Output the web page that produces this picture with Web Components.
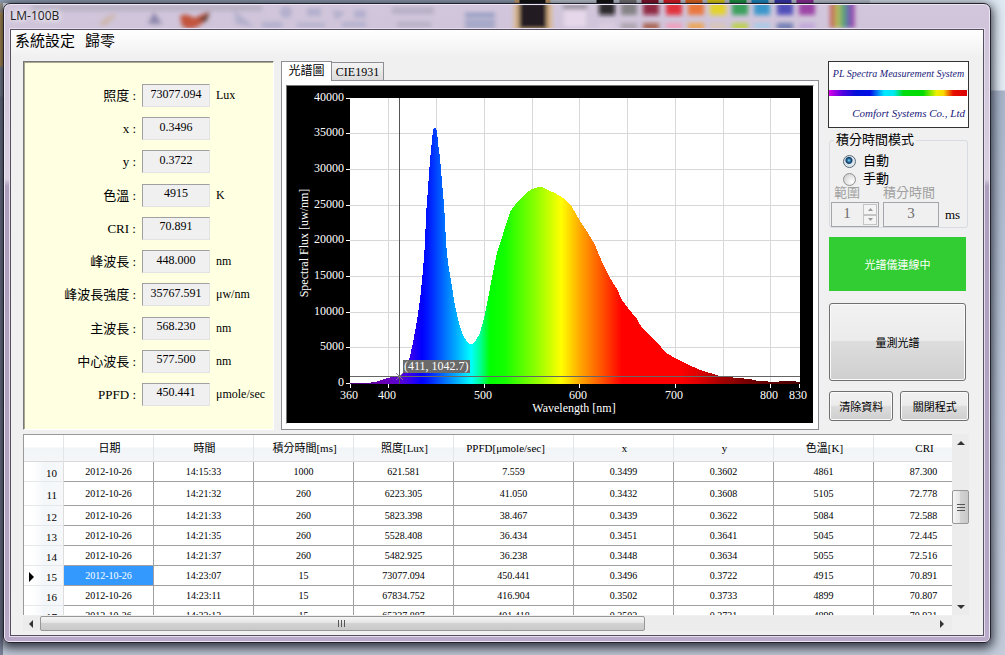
<!DOCTYPE html>
<html lang="zh-Hant">
<head>
<meta charset="utf-8">
<title>LM-100B</title>
<style>
html,body{margin:0;height:100%}
body{box-sizing:border-box;height:100vh;padding:3px 14px 12px 3px;overflow:hidden;display:flex;
 font-family:"Liberation Serif","Noto Sans CJK TC",serif;font-size:13px;color:#000;
 background:
 linear-gradient(90deg,#8f9db0 0 514px,#c9a06a 515px 519px,#111 520px 545px,#c9a06a 546px 550px,#c4ccd6 551px 596px,#111 597px 613px,#c4ccd6 614px 619px,#777 620px 636px,#c4ccd6 637px 641px,#85122b 642px 658px,#c4ccd6 659px 663px,#e51a22 664px 680px,#c4ccd6 681px 685px,#ee6a1e 686px 702px,#c4ccd6 703px 707px,#e8d50e 708px 724px,#c4ccd6 725px 729px,#1f9a44 730px 746px,#c4ccd6 747px 751px,#1c8fc8 752px 768px,#c4ccd6 769px 774px,#3b38b5 775px 791px,#c4ccd6 792px 796px,#93309c 797px 813px,#c4ccd6 814px) 0 0/870px 3px no-repeat,
 linear-gradient(180deg,#a09a90 0 12px,#c9a25c 13px 66px,#8d93a4 67px 96px,#7c8298 97px) 0 0/3px 100% no-repeat,
 linear-gradient(180deg,#dfe9f3 0,#e4edf6 90px,#a9b6cb 91px,#bcc8da 400px,#c3cbda 100%)}
app-window{flex:1}
.top{display:flex;height:369px;flex:none}
reading-panel{width:251px;margin-right:7px}
tab-view{flex:1;min-width:0;margin-right:9px}
.side{width:141px;display:flex;flex-direction:column}
.pair{display:grid;grid-template:30px / 64fr 68fr;gap:7px;margin:10px 0 0 1px}
status-tile{margin:9px 3px 0 1px;height:54px}
.measure{margin:12px 3px 0 1px;height:78px}
data-grid{flex:1;min-height:0;margin-top:4px}
</style>
</head>
<body>
<app-window caption="LM-100B">
  <menu-bar slot="menu"></menu-bar>
  <div class="top">
    <reading-panel>
      <reading-row label="照度" value="73077.094" unit="Lux"></reading-row>
      <reading-row label="x" value="0.3496"></reading-row>
      <reading-row label="y" value="0.3722"></reading-row>
      <reading-row label="色溫" value="4915" unit="K"></reading-row>
      <reading-row label="CRI" value="70.891"></reading-row>
      <reading-row label="峰波長" value="448.000" unit="nm"></reading-row>
      <reading-row label="峰波長強度" value="35767.591" unit="μw/nm"></reading-row>
      <reading-row label="主波長" value="568.230" unit="nm"></reading-row>
      <reading-row label="中心波長" value="577.500" unit="nm"></reading-row>
      <reading-row label="PPFD" value="450.441" unit="μmole/sec"></reading-row>
    </reading-panel>
    <tab-view><spectrum-chart></spectrum-chart></tab-view>
    <div class="side">
      <brand-logo></brand-logo>
      <mode-group></mode-group>
      <status-tile>光譜儀連線中</status-tile>
      <push-button class="measure">量測光譜</push-button>
      <div class="pair"><push-button>清除資料</push-button><push-button>關閉程式</push-button></div>
    </div>
  </div>
  <data-grid></data-grid>
</app-window>

<script>
function define(name, render) {
  customElements.define(name, class extends HTMLElement {
    connectedCallback() {
      if (this.shadowRoot) return;
      const root = this.attachShadow({ mode: 'open' });
      root.innerHTML = '<style>:host,*{box-sizing:border-box}</style>' + render(this);
    }
  });
}

/* Window frame with the toolbar of another program showing through the glass caption */
const swatches = [['#111','#dccfe0'],['#777','#a79fa8'],['#85122b','#a2553c'],['#e51a22','#f59ab8'],['#ee6a1e','#f2a13c'],
  ['#e8d50e','#d9c5b2'],['#1f9a44','#b9d436'],['#1c8fc8','#a4cbe8'],['#3b38b5','#5f71ad'],['#93309c','#bfa5da']];
const glass = `<svg width="988" height="28" viewBox="3 3 988 28" aria-hidden="true">
  <g filter="url(#soft)">
   <path d="M30 3h230v6H30z" fill="#8a8b96" opacity=".35"/>
   <path d="M97 22q10-12 18-9l-12 11z" fill="#c9a06a" opacity=".4"/>
   <path d="M146 22l6-12 8 12z" fill="#4a4a80" opacity=".5"/>
   <path d="M178 14q6-4 14 2l14-6q2 6-8 13t-18 1z" fill="#c2543c"/>
   <path d="M196 18l12-8-4 10z" fill="#5e4036"/>
   <g fill="#8490b8" opacity=".4"><path d="M232 8l20 17-18-3z"/><circle cx="284" cy="10" r="6"/><path d="M305 6h14v8h-14zM330 8l14 2-10 8zM352 8h12v8h-12zM260 20h20v6h-20zM295 21h28v4h-28zM340 20h24v5h-24z"/></g>
   <path d="M390 5h42v7h-42zM395 20h34v5h-34z" fill="#8a8aa0" opacity=".35"/>
   <path d="M463 11h30v4h-30zM463 18h30v3h-30zM463 23h30v3h-30z" fill="#7c8cb8" opacity=".8"/>
   <rect x="512" y="0" width="38" height="30" fill="#d9b68c"/><rect x="517" y="0" width="28" height="27" fill="#211d22"/>
   <rect x="562" y="8" width="22" height="17" fill="#e6d8ea"/><rect x="561" y="3" width="24" height="4" fill="#8a8690"/>
   ${swatches.map((s,i)=>{const x=597+Math.round(i*22.2);return `<rect x="${x}" y="0" width="16" height="13" fill="${s[0]}" opacity=".85"/><rect x="${x}" y="21" width="16" height="7" fill="${s[1]}" opacity=".85"/>`}).join('')}
   <rect x="828" y="0" width="25" height="26" fill="url(#rb)" opacity=".9"/>
  </g>
  <defs><filter id="soft" x="-5%" y="-50%" width="110%" height="200%"><feGaussianBlur stdDeviation="2"/></filter>
  <linearGradient id="rb"><stop stop-color="#c33b4b"/><stop offset=".3" stop-color="#b8c04c"/><stop offset=".55" stop-color="#46a070"/><stop offset=".8" stop-color="#6a48b8"/><stop offset="1" stop-color="#b24aa0"/></linearGradient></defs>
 </svg>`;
define('app-window', el => `<style>
:host{display:flex;flex-direction:column;min-width:0;border:1px solid #22222c;border-radius:7px 7px 6px 6px;padding:0 6px 6px;position:relative;
 background:linear-gradient(180deg,#d2c6dc 0,#cfc4d9 26px,#d9d0e0 175px,#ad9fbd 182px,#b5a6c4 600px,#bbabca 100%);
 box-shadow:inset 0 0 0 1px #eee6f4,0 3px 11px 2px rgba(10,12,22,.8)}
.glass{position:absolute;inset:1px 1px auto;height:25px;overflow:hidden;border-radius:6px 6px 0 0}
.glass svg{display:block}
h1{position:relative;margin:0;height:25px;flex:none;font:12px/24px "Open Sans","Noto Sans",sans-serif;color:#222;text-shadow:0 0 6px #fff,0 0 6px #fff}
main{position:relative;flex:1;min-height:0;display:flex;flex-direction:column;border:1px solid #55505f;background:#f0f0f0;
 padding-bottom:4px;box-shadow:0 0 0 1px #e6dcee}
.body{flex:1;min-height:0;display:flex;flex-direction:column;padding:0 14px 0 12px}
</style><div class="glass">${glass}</div><h1>${el.getAttribute('caption')}</h1><main><slot name="menu"></slot><div class="body"><slot></slot></div></main>`);

define('menu-bar', () => `<style>
:host{display:block;height:31px;flex:none;background:linear-gradient(#fff,#f0f0f0 28px)}
nav{display:flex;gap:10px;padding:0 4px}
button{all:unset;font-size:15px;line-height:22px}
</style><nav><button>系統設定</button><button>歸零</button></nav>`);

define('reading-panel', () => `<style>
:host{display:flex;flex-direction:column;justify-content:space-between;background:#ffffe1;padding:22px 0 23px;
 border:1px solid;border-color:#777 #fff #fff #777;box-shadow:inset 1px 1px #a8a890}
</style><slot></slot>`);

define('reading-row', el => `<style>
:host{display:grid;grid-template-columns:112px 68px 1fr;column-gap:6px;align-items:center;height:23px}
label{text-align:right;line-height:23px;white-space:nowrap}
input{width:68px;height:23px;margin:0;padding:0 0 3px;border:1px solid;border-color:#a0a0a0 #e3e3e3 #e3e3e3 #a0a0a0;background:#f0f0f0;
 font:12px "Liberation Serif",serif;text-align:center;color:#000;outline:none}
span{line-height:23px;font-size:12px}
</style><label for="v">${el.getAttribute('label')} :</label><input id="v" readonly value="${el.getAttribute('value')}"><span>${el.getAttribute('unit')||''}</span>`);

define('tab-view', () => `<style>
:host{display:flex;flex-direction:column}
.tabs{display:flex;align-items:flex-end;height:19px;flex:none}
button{margin:0;font:12px/16px "Liberation Serif","Noto Sans CJK TC",serif;color:#000;border:1px solid #8c8e94;border-bottom:0;padding:0;text-align:center}
.on{width:51px;background:#fff;position:relative;z-index:1;padding-bottom:2px;margin-bottom:-1px;height:20px}
.off{width:52px;height:18px;border-left:0;background:linear-gradient(#f4f4f4,#dcdcdc)}
.page{flex:1;min-height:0;border:1px solid #8c8e94;background:#fff;padding:4px 4px 5px;display:flex}
::slotted(*){flex:1;min-width:0}
</style><div class="tabs" role="tablist"><button class="on" role="tab" aria-selected="true">光譜圖</button><button class="off" role="tab">CIE1931</button></div><div class="page" role="tabpanel"><slot></slot></div>`);

/* Chart: 360–830 nm across 350..800, 0–40000 over 383..98 */
const curve = '350,383 366,383 375,382 381,380 387,378 392,377 399,376 404,372 409,360 413,343 417,320 420,300 423,270 425,243 426,215 428,188 430,160 432,140 433,131 434,128 436,128 437,131 438,143 440,158 442,182 444,205 445,220 446,243 448,263 452,287 455,306 459,323 463,335 467,342 470,344 472,344 475,342 480,333 484,318 487,304 490,288 493,273 497,253 503,234 510,212 517,202 525,194 532,189 538,187 542,187 548,190 555,193 565,199 572,207 580,221 588,233 595,245 602,262 610,278 617,289 622,300 628,308 637,319 642,328 650,336 658,343 665,352 675,358 687,364 700,370 720,376 737,378 750,379 758,381 777,382 780,381 791,381 800,382 800,384 350,384';
const yt = [0,1,2,3,4,5,6,7,8].map(i => [i*5000, Math.round(383 - i*35.65)]);
const xt = [[360,350],[400,388],[500,484],[600,579],[700,675],[800,770],[830,799]];
define('spectrum-chart', () => `<style>
:host{display:flex;background:#000;border:1px solid;border-color:#777 #fff #fff #777}
svg{display:block;width:100%;height:100%}
text{font:12px "Liberation Serif",serif;fill:#fff}
</style><svg viewBox="287 86 526 337" role="img" aria-label="Spectral Flux">
<defs><linearGradient id="sp" gradientUnits="userSpaceOnUse" x1="350" y1="0" x2="800" y2="0">
${[[350,'#4a0070'],[385,'#6a00b8'],[400,'#5800d4'],[412,'#3000f0'],[422,'#0000ff'],[428,'#0018ff'],[446,'#0078ff'],[460,'#00c0ff'],[471,'#00ffff'],[480,'#00ff98'],[490,'#00ff00'],[505,'#14ff00'],[538,'#96ff00'],[561,'#ffff00'],[566,'#ffea00'],[580,'#ffa800'],[600,'#ff5a00'],[622,'#ff0000'],[680,'#ff0000'],[700,'#dc0000'],[720,'#a80000'],[750,'#700000'],[800,'#480000']].map(([x,c])=>`<stop offset="${(x-350)/450}" stop-color="${c}"/>`).join('')}
</linearGradient></defs>
<g shape-rendering="crispEdges">
<rect x="350" y="98" width="450" height="286" fill="#fff"/>
${yt.slice(1,8).map(([,y])=>`<rect x="350" y="${y}" width="450" height="1" fill="#d8d8d8"/>`).join('')}
${[388,436,484,532,579,627,675,723,770].map(x=>`<rect x="${x}" y="98" width="1" height="286" fill="#d8d8d8"/>`).join('')}
<polygon points="${curve}" fill="url(#sp)"/>
${yt.map(([,y])=>`<rect x="346" y="${y}" width="4" height="1" fill="#fff"/>`).join('')}
${xt.map(([,x])=>`<rect x="${x}" y="384" width="1" height="4" fill="#fff"/>`).join('')}
<rect x="399" y="98" width="1" height="286" fill="#555"/><rect x="350" y="376" width="450" height="1" fill="#666"/>
<path d="M396 373l7 7M403 373l-7 7" stroke="#8c7aa0" fill="none"/>
<rect x="403" y="360" width="67" height="13" fill="#6a6a6a"/>
</g>
${yt.map(([v,y])=>`<text x="344" y="${y+3}" text-anchor="end">${v}</text>`).join('')}
${xt.map(([v,x])=>`<text x="${x-1}" y="399" text-anchor="middle">${v}</text>`).join('')}
<text x="404" y="370">(411, 1042.7)</text>
<text x="574" y="412" text-anchor="middle">Wavelength [nm]</text>
<text transform="translate(308 243) rotate(-90)" text-anchor="middle">Spectral Flux [uw/nm]</text>
</svg>`);

define('brand-logo', () => `<style>
:host{display:flex;flex-direction:column;height:67px;border:1px solid #333;background:#fff;flex:none;font-style:italic;font-size:10px;color:#20207a;white-space:nowrap}
p{margin:0;height:28px;line-height:24px;text-align:center}
i{display:block;height:6px;margin-right:1px;background:linear-gradient(90deg,#d800e8 0,#5000e0 10%,#0010d8 20%,#0010e8 30%,#00e8ff 40%,#00e8f0 47%,#00dc10 54%,#00dc00 68%,#f0f000 78%,#f8d800 83%,#e81000 90%,#d80000)}
p+i+p{text-align:right;line-height:34px;padding-right:3px;font-size:11px}
</style><p>PL Spectra Measurement System</p><i></i><p>Comfort Systems Co., Ltd</p>`);

define('mode-group', () => `<style>
:host{display:block;margin:4px 1px 0;height:96px;flex:none}
fieldset{margin:0;height:96px;padding:4px 0 0;border:1px solid #d8dce0;border-radius:3px;min-width:0}
legend{margin-left:4px;padding:0 2px;line-height:16px;font-size:13px}
.r{display:flex;align-items:center;height:18px;margin-left:13px;gap:7px}
.r label{line-height:18px}
input[type=radio]{appearance:none;width:13px;height:13px;margin:0;border:1px solid #8e8f8f;border-radius:50%;background:radial-gradient(circle at 70% 70%,#fff,#c8c8c8)}
input[type=radio]:checked{border-color:#5a6a78;background:radial-gradient(circle at 45% 40%,#7fd8f8 0,#1d5f90 2px,#123a60 3px,#d8e2ea 4px,#eef2f5)}
.g{display:grid;grid-template-columns:48px 56px auto;column-gap:4px;margin:0 0 0 1px;align-items:center}
.g label{color:#a0a0a0;font-size:13px;line-height:10px;height:14px;white-space:nowrap;padding-left:3px}
.g label+label{padding:0}
.g input{width:100%;height:25px;margin:0;border:1px solid #a4a6ac;background:#f0f0f0;color:#6d6d6d;font:15px "Liberation Serif",serif;text-align:center;padding:0 0 2px;outline:none}
.spin{display:flex;border:1px solid #a4a6ac;height:25px}
.g .spin input{border:0;height:23px;min-width:0}
.spin div{display:flex;flex-direction:column;flex:none;width:16px;padding:1px}
.spin button{flex:1;border:1px solid #c4c4c4;background:#f4f4f4;padding:0;font-size:0;display:flex;align-items:center;justify-content:center}
.ms{font-size:13px;padding-left:2px}
</style><fieldset><legend>積分時間模式</legend>
<div class="r"><input type="radio" name="m" id="a" checked><label for="a">自動</label></div>
<div class="r"><input type="radio" name="m" id="b"><label for="b">手動</label></div>
<div class="g"><label for="c">範圍</label><label for="d">積分時間</label><span></span>
<div class="spin"><input id="c" value="1" disabled><div><button disabled aria-label="up"><svg width="5" height="3"><path d="M0 3l2.500-3L5 3z" fill="#999"/></svg></button><button disabled aria-label="down"><svg width="5" height="3"><path d="M0 0l2.500 3L5 0z" fill="#999"/></svg></button></div></div>
<input id="d" value="3" disabled><span class="ms">ms</span></div></fieldset>`);

define('status-tile', () => `<style>
:host{display:flex;align-items:center;justify-content:center;flex:none;background:#32cd32;color:#fff;font-size:11px}
</style><span role="status"><slot></slot></span>`);

define('push-button', () => `<style>
:host{display:flex;flex:none}
button{flex:1;margin:0;padding:0;border:1px solid #707070;border-radius:3px;color:#000;font:11px "Liberation Serif","Noto Sans CJK TC",serif;
 background:linear-gradient(#f2f2f2,#ebebeb 48%,#dddddd 49%,#cfcfcf);box-shadow:inset 0 0 0 1px #fafafa}
</style><button><slot></slot></button>`);

define('scroll-bar', el => {
  const v = el.hasAttribute('vertical');
  const [a, b, c] = el.getAttribute('parts').split(' ');
  const up = v ? 'M0 4l4-4 4 4z' : 'M5 0v8L1 4z', dn = v ? 'M0 0l4 4 4-4z' : 'M0 0v8l4-4z';
  const grip = v ? '<path d="M1 1.500h8M1 4.500h8M1 7.500h8" stroke="#555"/>' : '<path d="M1.500 1v7M4.500 1v7M7.500 1v7" stroke="#555"/>';
  return `<style>
:host{display:flex;flex-direction:${v?'column':'row'};background:#ececec}
button{border:0;background:none;padding:0;flex:0 0 17px;display:flex;align-items:center;justify-content:center}
.a{flex:${a}}.c{flex:${c}}
.t{flex:${b};border:1px solid #979797;border-radius:2px;display:flex;align-items:center;justify-content:center;background:linear-gradient(${v?90:180}deg,#f5f5f5,#e4e4e4 45%,#d2d2d2 50%,#c9c9c9)}
</style><button aria-label="back"><svg width="8" height="8" viewBox="0 ${v?-2:0} 8 8"><path d="${up}" fill="#333"/></svg></button><div class="a"></div><div class="t"><svg width="10" height="9">${grip}</svg></div><div class="c"></div><button aria-label="forward"><svg width="8" height="8" viewBox="0 ${v?-2:0} 8 8"><path d="${dn}" fill="#333"/></svg></button>`;
});

const heads = ['日期','時間','積分時間[ms]','照度[Lux]','PPFD[μmole/sec]','x','y','色溫[K]','CRI'];
const rows = `10|14:15:33|1000|621.581|7.559|0.3499|0.3602|4861|87.300
11|14:21:32|260|6223.305|41.050|0.3432|0.3608|5105|72.778
12|14:21:33|260|5823.398|38.467|0.3439|0.3622|5084|72.588
13|14:21:35|260|5528.408|36.434|0.3451|0.3641|5045|72.445
14|14:21:37|260|5482.925|36.238|0.3448|0.3634|5055|72.516
15|14:23:07|15|73077.094|450.441|0.3496|0.3722|4915|70.891
16|14:23:11|15|67834.752|416.904|0.3502|0.3733|4899|70.807
17|14:23:13|15|65237.887|401.418|0.3502|0.3731|4899|70.931`.split('\n').map(r => r.split('|'));
define('data-grid', () => `<style>
:host{display:grid;grid-template:minmax(0,1fr) 16px / minmax(0,1fr) 17px}
.view{overflow:hidden;border:1px solid #999;border-right:0;border-bottom:0;background:#fff}
table{border-collapse:separate;border-spacing:0;table-layout:fixed;width:100%;min-width:950px;font-size:10px}
th,td{padding:0;text-align:center;font-weight:400;white-space:nowrap;line-height:18px}
thead th{height:27px;padding-left:2px;border-right:1px solid #e2e6e8;border-bottom:1px solid #d8dadc;background:linear-gradient(#fff 45%,#f2f5f8 50%,#f4f6f8);font-size:11px}
thead th:nth-child(6){padding-right:18px}
tbody td{height:20px;border-right:1px solid #a0a0a0;border-bottom:1px solid #a0a0a0}
tbody th{height:20px;text-align:right;padding:2px 6px 0 0;font-size:11px;line-height:16px;background:linear-gradient(90deg,#fff 8px,#f4f7fa 20px,#f6f8fa);border-right:1px solid #ddd;border-bottom:1px solid #e4e8ea}
tr.tall td,tr.tall th{height:24px}
.sel{background:#3399ff;color:#fff}
tbody svg{float:left;margin:3px 0 0 5px}
.h{margin-top:1px}
</style><div class="view"><table><colgroup><col style="width:40px"><col style="width:90px"><col style="width:100px"><col style="width:100px"><col style="width:100px"><col style="width:120px"><col style="width:100px"><col style="width:100px"><col style="width:100px"><col style="width:100px"></colgroup>
<thead><tr><th></th>${heads.map(h=>`<th scope="col">${h}</th>`).join('')}</tr></thead>
<tbody>${rows.map(r=>`<tr${r[0]==='11'?' class="tall"':''}><th scope="row">${r[0]==='15'?'<svg width="6" height="10"><path d="M0 0l5 5-5 5z"/></svg>':''}${r[0]}</th><td${r[0]==='15'?' class="sel"':''}>2012-10-26</td>${r.slice(1).map(c=>`<td>${c}</td>`).join('')}</tr>`).join('')}</tbody></table></div>
<scroll-bar vertical parts="40 32 75"></scroll-bar><scroll-bar class="h" parts="0 605 291"></scroll-bar>`);
</script>
</body>
</html>
